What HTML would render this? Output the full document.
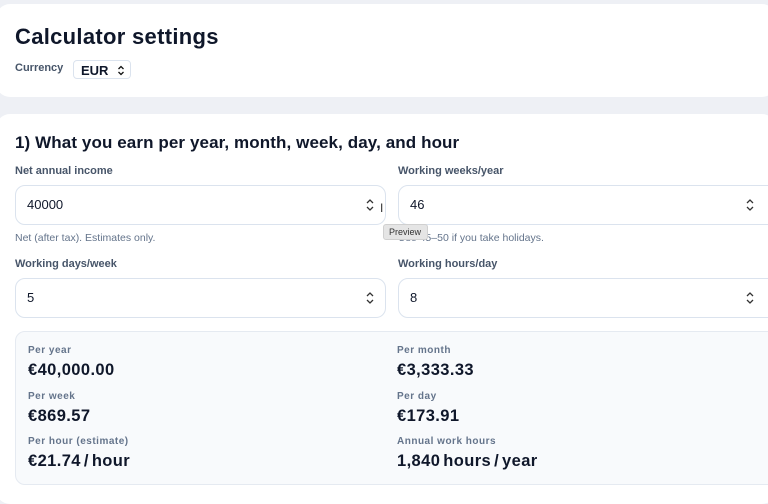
<!DOCTYPE html>
<html><head><meta charset="utf-8"><style>
*{box-sizing:border-box;margin:0;padding:0}
body{width:768px;height:491px;overflow:hidden;background:#eef0f5;font-family:"Liberation Sans",sans-serif;color:#0f172a;position:relative}
.card{position:absolute;left:-4px;width:780px;background:#fff;border-radius:14px}
.abs{position:absolute;white-space:nowrap}
.h1{font-size:22px;font-weight:700;letter-spacing:0.3px}
.h2{font-size:17px;font-weight:700;letter-spacing:0.1px}
.lab{font-size:11px;font-weight:700;color:#475569}
.help{font-size:10.5px;color:#64748b}
.inp{position:absolute;height:40px;border:1px solid #dbe3ee;border-radius:10px;background:#fff;font-size:13px;padding:11px 0 0 11px}
.sp{position:absolute;right:10px;top:11px;width:10px;height:16px}
.rl{font-size:10px;font-weight:700;color:#64748b;letter-spacing:0.5px}
.rv{font-size:16.5px;font-weight:700;color:#0f172a;letter-spacing:0.4px;word-spacing:-2px}
</style></head><body>
<div class="card" style="top:4px;height:93px"></div>
<div class="card" style="top:114px;height:390px"></div>
<div class="abs h1" style="left:15px;top:24px">Calculator settings</div>
<div class="abs lab" style="left:15px;top:62px">Currency</div>
<div class="abs" style="left:73px;top:60px;width:58px;height:19px;border:1px solid #dbe3ee;border-radius:4px;font-size:13px;font-weight:700;padding:2px 0 0 7px">EUR<svg style="position:absolute;right:5px;top:4px" width="8" height="11" viewBox="0 0 8 11"><path d="M1.5 4 4 1.5 6.5 4M1.5 7 4 9.5 6.5 7" fill="none" stroke="#111" stroke-width="1.3"/></svg></div>

<div class="abs h2" style="left:15px;top:133px">1) What you earn per year, month, week, day, and hour</div>
<div class="abs lab" style="left:15px;top:165px">Net annual income</div>
<div class="abs lab" style="left:398px;top:165px">Working weeks/year</div>
<div class="inp" style="left:15px;top:185px;width:371px">40000<svg class="sp" viewBox="0 0 10 16"><path d="M2 6 5 3 8 6M2 10 5 13 8 10" fill="none" stroke="#333" stroke-width="1.3"/></svg></div>
<div class="inp" style="left:398px;top:185px;width:380px">46<svg class="sp" style="right:22px" viewBox="0 0 10 16"><path d="M2 6 5 3 8 6M2 10 5 13 8 10" fill="none" stroke="#333" stroke-width="1.3"/></svg></div>
<div class="abs help" style="left:15px;top:232px">Net (after tax). Estimates only.</div>
<div class="abs help" style="left:398px;top:232px">Use 45–50 if you take holidays.</div>
<div class="abs" style="left:383px;top:224px;width:45px;height:16px;background:#e5e5e5;border:1px solid #d0d0d0;border-radius:3px;font-size:9px;color:#333;padding:2px 0 0 5px">Preview</div>
<div class="abs" style="left:380px;top:201px;font-size:12px;color:#333">I</div>
<div class="abs lab" style="left:15px;top:258px">Working days/week</div>
<div class="abs lab" style="left:398px;top:258px">Working hours/day</div>
<div class="inp" style="left:15px;top:278px;width:371px">5<svg class="sp" viewBox="0 0 10 16"><path d="M2 6 5 3 8 6M2 10 5 13 8 10" fill="none" stroke="#333" stroke-width="1.3"/></svg></div>
<div class="inp" style="left:398px;top:278px;width:380px">8<svg class="sp" style="right:22px" viewBox="0 0 10 16"><path d="M2 6 5 3 8 6M2 10 5 13 8 10" fill="none" stroke="#333" stroke-width="1.3"/></svg></div>

<div class="abs" style="left:15px;top:331px;width:770px;height:154px;background:#f8fafc;border:1px solid #e5eaf1;border-radius:10px"></div>
<div class="abs rl" style="left:28px;top:345px">Per year</div>
<div class="abs rv" style="left:28px;top:361px">€40,000.00</div>
<div class="abs rl" style="left:397px;top:345px">Per month</div>
<div class="abs rv" style="left:397px;top:361px">€3,333.33</div>
<div class="abs rl" style="left:28px;top:391px">Per week</div>
<div class="abs rv" style="left:28px;top:407px">€869.57</div>
<div class="abs rl" style="left:397px;top:391px">Per day</div>
<div class="abs rv" style="left:397px;top:407px">€173.91</div>
<div class="abs rl" style="left:28px;top:436px">Per hour (estimate)</div>
<div class="abs rv" style="left:28px;top:452px">€21.74 / hour</div>
<div class="abs rl" style="left:397px;top:436px">Annual work hours</div>
<div class="abs rv" style="left:397px;top:452px">1,840 hours / year</div>
</body></html>
